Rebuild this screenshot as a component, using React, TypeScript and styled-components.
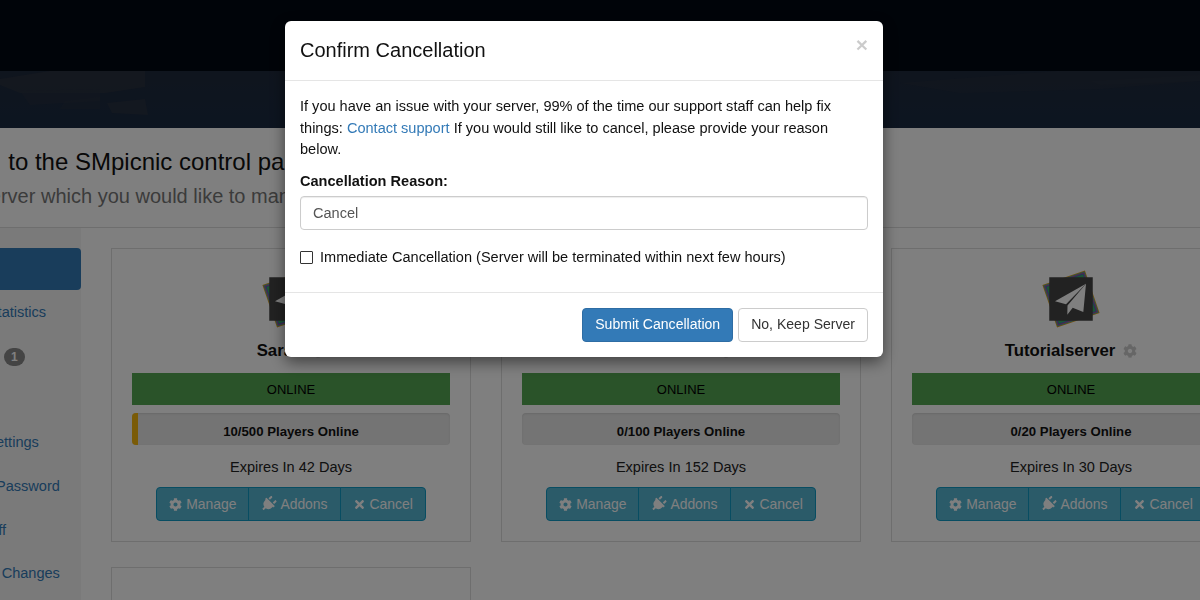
import React from "react";
import styled, { createGlobalStyle } from "styled-components";
import { FaCog, FaPlug, FaTimes } from "react-icons/fa";

const Global = createGlobalStyle`
  html, body { margin: 0; padding: 0; height: 100%; overflow: hidden; background: #fff; }
  * { box-sizing: border-box; }
  body { font-family: "Liberation Sans", Arial, sans-serif; font-size: 14.55px; line-height: 1.5; color: #333; }
`;

const Screen = styled.div`
  position: relative;
  width: 1200px;
  height: 600px;
  overflow: hidden;
`;
const TopBar = styled.header`
  height: 71px;
  background: #000812;
`;
const Banner = styled.div`
  height: 57px;
  background: linear-gradient(#1f2a3c, #1a2a42);
  svg { display: block; width: 100%; height: 100%; }
`;
const Content = styled.main`
  margin-left: -98px;
  width: 1400px;
`;
const Heading = styled.h1`
  margin: 0 0 0 -3px;
  padding-top: 20px;
  font-size: 24px;
  font-weight: 400;
  line-height: 28px;
  color: #111;
  white-space: nowrap;
`;
const Lead = styled.span`
  margin-right: 3px;
`;
const Sub = styled.h2`
  margin: 0;
  padding-top: 6px;
  font-size: 20px;
  font-weight: 400;
  line-height: 28px;
  color: #777;
  white-space: nowrap;
`;
const Rule = styled.hr`
  margin: 17px 0 20px;
  border: 0;
  border-top: 1px solid #ddd;
`;
const Columns = styled.div`
  display: flex;
  gap: 30px;
  margin-left: 26px;
`;
const Side = styled.nav`
  width: 153px;
  flex: none;
  background: #f5f5f5;
  margin-top: -20px;
  padding-top: 20px;
  height: 400px;
  display: flex;
  flex-direction: column;
  gap: 2px;
`;
const Pill = styled.a<{ $active?: boolean }>`
  display: block;
  padding: 10px 13px;
  height: 41.6px;
  border-radius: 4px;
  white-space: nowrap;
  color: ${(p) => (p.$active ? "#fff" : "#337ab7")};
  background: ${(p) => (p.$active ? "#337ab7" : "transparent")};
`;
const Badge = styled.span`
  display: inline-block;
  margin-left: 12px;
  min-width: 21px;
  padding: 3px 7px;
  border-radius: 10px;
  background: #888;
  color: #fff;
  font-size: 12px;
  font-weight: 700;
  line-height: 1;
  vertical-align: -1px;
`;
const Cards = styled.div`
  display: grid;
  grid-template-columns: repeat(3, 360px);
  gap: 25px 30px;
  align-items: start;
`;
const Card = styled.section`
  height: 294px;
  border: 1px solid #ddd;
  padding: 20px;
  text-align: center;
`;
const LogoBox = styled.div`
  height: 60px;
  svg { display: block; margin: 0 auto; }
`;
const Name = styled.div`
  margin-top: 9px;
  height: 26px;
  font-size: 16.8px;
  font-weight: 700;
  line-height: 26px;
  color: #111;
  display: flex;
  justify-content: center;
  align-items: center;
  gap: 8px;
  svg { color: #ccc; width: 14px; height: 14px; }
`;
const Status = styled.div`
  margin-top: 9px;
  height: 32px;
  background: #55a653;
  font-size: 13px;
  font-weight: 400;
  line-height: 33px;
  color: #000;
`;
const Progress = styled.div`
  position: relative;
  margin-top: 8px;
  height: 32px;
  border-radius: 4px;
  overflow: hidden;
  background: #e8e8e8;
  box-shadow: inset 0 1px 2px rgba(0, 0, 0, 0.1);
`;
const Fill = styled.div`
  height: 100%;
  background: #f5b60f;
`;
const ProgressLabel = styled.div`
  position: absolute;
  inset: 0;
  font-size: 13.2px;
  font-weight: 700;
  line-height: 37px;
  color: #111;
`;
const Expires = styled.div`
  margin-top: 11px;
  height: 22px;
  line-height: 22px;
  color: #222;
`;
const Group = styled.div`
  display: inline-flex;
  margin-top: 9px;
  height: 34px;
`;
const GroupBtn = styled.button`
  display: inline-flex;
  align-items: center;
  gap: 4px;
  height: 34px;
  margin-left: -1px;
  padding: 0 12px;
  background: #56b6d3;
  border: 1px solid #109ac4;
  color: #fff;
  font: inherit;
  font-size: 13.9px;
  white-space: nowrap;
  svg { width: 13px; height: 13px; }
  &:first-child { margin-left: 0; border-radius: 4px 0 0 4px; }
  &:last-child { border-radius: 0 4px 4px 0; }
`;
const PlugIcon = styled(FaPlug)`
  transform: rotate(45deg);
  && { width: 15px; height: 16px; }
`;
const Backdrop = styled.div`
  position: absolute;
  inset: 0;
  z-index: 10;
  background: rgba(0, 0, 0, 0.5);
`;
const Modal = styled.div`
  position: absolute;
  z-index: 20;
  left: 285px;
  top: 21px;
  width: 598px;
  height: 336px;
  background: #fff;
  border-radius: 6px;
  box-shadow: 0 5px 15px rgba(0, 0, 0, 0.5);
  color: #111;
`;
const ModalHead = styled.div`
  display: flex;
  justify-content: space-between;
  height: 60px;
  padding: 15px;
  border-bottom: 1px solid #e5e5e5;
`;
const ModalTitle = styled.h4`
  margin: 0;
  font-size: 20px;
  font-weight: 400;
  line-height: 28px;
  color: #111;
`;
const Close = styled.button`
  margin: -4px 0 0;
  padding: 0;
  height: 24px;
  border: 0;
  background: none;
  font-family: inherit;
  font-size: 21px;
  font-weight: 700;
  line-height: 1;
  color: #000;
  opacity: 0.2;
`;
const ModalBody = styled.div`
  padding: 15px 15px 0;
  height: 212px;
  border-bottom: 1px solid #e5e5e5;
`;
const Para = styled.p`
  margin: 0;
  line-height: 21.6px;
  a { color: #337ab7; }
`;
const Label = styled.label`
  display: block;
  margin-top: 10px;
  font-weight: 700;
  line-height: 21.6px;
`;
const Input = styled.input`
  display: block;
  width: 100%;
  height: 34px;
  margin-top: 4px;
  padding: 6px 12px;
  border: 1px solid #ccc;
  border-radius: 4px;
  box-shadow: inset 0 1px 1px rgba(0, 0, 0, 0.075);
  font: inherit;
  color: #555;
`;
const CheckRow = styled.label`
  display: flex;
  align-items: center;
  gap: 7px;
  margin-top: 17px;
  line-height: 21.6px;
`;
const Box = styled.input`
  width: 13px;
  height: 13px;
  margin: 0 0 1px;
  appearance: none;
  border: 1px solid #333;
  border-radius: 1px;
  background: #fff;
`;
const ModalFoot = styled.div`
  display: flex;
  justify-content: flex-end;
  gap: 5px;
  padding: 15px;
`;
const FootBtn = styled.button<{ $primary?: boolean }>`
  height: 34px;
  padding: 0 12px;
  border-radius: 4px;
  border: 1px solid ${(p) => (p.$primary ? "#2e6da4" : "#ccc")};
  background: ${(p) => (p.$primary ? "#337ab7" : "#fff")};
  color: ${(p) => (p.$primary ? "#fff" : "#333")};
  font: inherit;
  font-size: 14.05px;
`;

const Logo = () => (
  <svg width="60" height="60" viewBox="0 0 60 60">
    <g transform="rotate(-19 30 30)">
      <rect x="7.5" y="7.5" width="45" height="45" fill="#e09a20" />
      <rect x="8.3" y="8.3" width="43.4" height="43.4" fill="#3aa8a0" />
      <rect x="9.1" y="9.1" width="41.8" height="41.8" fill="#c0408a" />
      <rect x="9.9" y="9.9" width="40.2" height="40.2" fill="#3a6fc0" />
      <rect x="10.7" y="10.7" width="38.6" height="38.6" fill="#3aa868" />
    </g>
    <rect x="8.25" y="8.25" width="43.5" height="43.5" fill="#444" />
    <path d="M45 14.7 14 32.3 25 35.2Z" fill="#fff" />
    <path d="M45 14.7 26.5 36.5 26.3 45.7 31.7 38.8 42.3 43Z" fill="#fff" />
  </svg>
);

const BannerArt = () => (
  <svg viewBox="0 0 1200 57" preserveAspectRatio="none">
    <g fill="#3c3c42" opacity="0.35">
      <polygon points="50,0 145,0 145,16 105,22 20,22 0,14 0,8" />
      <polygon points="20,20 100,18 100,30 30,34" opacity="0.6" />
      <polygon points="107,32 145,28 148,44 112,42" />
      <polygon points="65,30 100,26 100,38 60,38" opacity="0.5" />
      <polygon points="900,12 1060,0 1200,0 1200,10 1100,18 960,22" opacity="0.5" />
      <polygon points="1090,10 1200,4 1200,10 1100,14" opacity="0.5" />
    </g>
  </svg>
);

const servers = [
  { name: "Sarah", players: 10, max: 500, days: 42 },
  { name: "Serverone", players: 0, max: 100, days: 152 },
  { name: "Tutorialserver", players: 0, max: 20, days: 30 },
];

const nav = ["Servers", "Server Statistics", "Support", "Billing", "Profile Settings", "Change Password", "View Staff", "Previous Changes"];

export default function App() {
  return (
    <Screen>
      <Global />
      <TopBar />
      <Banner><BannerArt /></Banner>
      <Content>
        <Heading><Lead>Welcome</Lead> to the SMpicnic control panel</Heading>
        <Sub>Select a server which you would like to manage</Sub>
        <Rule />
        <Columns>
          <Side>
            {nav.map((n, i) => (
              <Pill key={n} $active={i === 0}>
                {n}
                {n === "Support" && <Badge>1</Badge>}
              </Pill>
            ))}
          </Side>
          <Cards>
            {servers.map((s) => (
              <Card key={s.name}>
                <LogoBox><Logo /></LogoBox>
                <Name>{s.name} <FaCog /></Name>
                <Status>ONLINE</Status>
                <Progress>
                  <Fill style={{ width: `${(s.players / s.max) * 100}%` }} />
                  <ProgressLabel>{s.players}/{s.max} Players Online</ProgressLabel>
                </Progress>
                <Expires>Expires In {s.days} Days</Expires>
                <Group>
                  <GroupBtn><FaCog /> Manage</GroupBtn>
                  <GroupBtn><PlugIcon /> Addons</GroupBtn>
                  <GroupBtn><FaTimes /> Cancel</GroupBtn>
                </Group>
              </Card>
            ))}
            <Card />
          </Cards>
        </Columns>
      </Content>
      <Backdrop />
      <Modal>
        <ModalHead>
          <ModalTitle>Confirm Cancellation</ModalTitle>
          <Close>×</Close>
        </ModalHead>
        <ModalBody>
          <Para>
            If you have an issue with your server, 99% of the time our support staff can help fix things: <a>Contact support</a> If you would still like to cancel, please provide your reason below.
          </Para>
          <Label>Cancellation Reason:</Label>
          <Input readOnly value="Cancel" />
          <CheckRow>
            <Box type="checkbox" readOnly />
            Immediate Cancellation (Server will be terminated within next few hours)
          </CheckRow>
        </ModalBody>
        <ModalFoot>
          <FootBtn $primary>Submit Cancellation</FootBtn>
          <FootBtn>No, Keep Server</FootBtn>
        </ModalFoot>
      </Modal>
    </Screen>
  );
}
